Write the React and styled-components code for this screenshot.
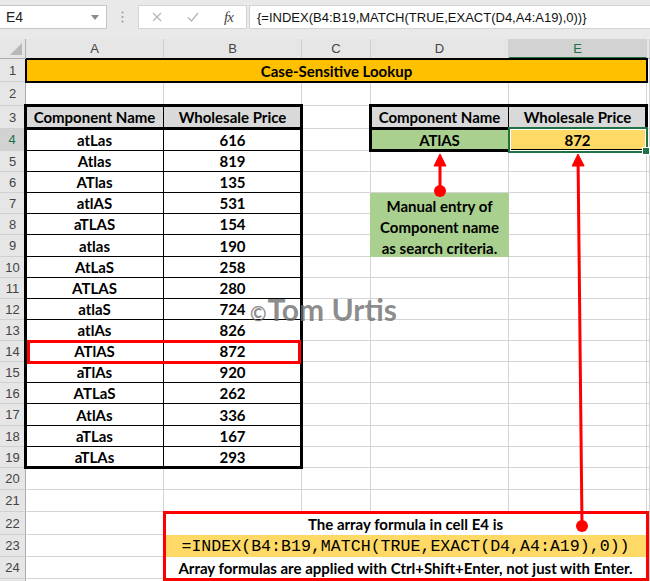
import React from 'react';
import styled, { createGlobalStyle } from 'styled-components';

const GlobalStyle = createGlobalStyle`
  html, body {
    margin: 0;
    padding: 0;
    background: #ffffff;
  }
  body {
    overflow: hidden;
  }
`;

// excel row heights, rows 1..25
const ROW_H = [23, 24, 23, 22, 21, 21, 21, 21, 22, 21, 21, 21, 21, 21, 21, 21, 22, 21, 21, 22, 22, 23, 22, 22, 21];
const COLS = ['A', 'B', 'C', 'D', 'E', 'F'];

const PARTS = [
  ['atLas', 616],
  ['Atlas', 819],
  ['ATlas', 135],
  ['atlAS', 531],
  ['aTLAS', 154],
  ['atlas', 190],
  ['AtLaS', 258],
  ['ATLAS', 280],
  ['atlaS', 724],
  ['atlAs', 826],
  ['ATlAS', 872],
  ['aTlAs', 920],
  ['ATLaS', 262],
  ['AtlAs', 336],
  ['aTLas', 167],
  ['aTLAs', 293],
];

const Window = styled.div`
  position: relative;
  width: 650px;
  height: 581px;
  overflow: hidden;
  background: #e9e9e9;
  font-family: 'Lato', sans-serif;
`;

const FormulaBar = styled.div`
  display: flex;
  align-items: flex-start;
  height: 39px;
  padding-top: 5px;
  box-sizing: border-box;
`;

const NameBox = styled.div`
  width: 107px;
  height: 24px;
  box-sizing: border-box;
  background: #fff;
  border: 1px solid #c6c6c6;
  border-left: none;
  display: flex;
  align-items: center;
  justify-content: space-between;
  padding: 0 7px 0 6px;
  font-family: 'Liberation Sans', sans-serif;
  font-size: 14px;
  color: #222;
`;

const Dots = styled.div`
  width: 31px;
  height: 24px;
  display: flex;
  align-items: center;
  justify-content: center;
`;

const FxBox = styled.div`
  width: 109px;
  height: 24px;
  box-sizing: border-box;
  background: #fff;
  border: 1px solid #d4d4d4;
  display: grid;
  grid-template-columns: 36px 36px 35px;
  align-items: center;
  justify-items: center;
`;

const FxLabel = styled.span`
  font-family: 'Liberation Serif', serif;
  font-style: italic;
  font-size: 15px;
  color: #444;
  letter-spacing: -1px;
`;

const FormulaInput = styled.div`
  flex: 1;
  height: 24px;
  margin-left: 2px;
  box-sizing: border-box;
  background: #fff;
  border: 1px solid #d4d4d4;
  border-right: none;
  padding-left: 7px;
  display: flex;
  align-items: center;
  font-family: 'Liberation Sans', sans-serif;
  font-size: 13px;
  color: #111;
`;

const Sheet = styled.div`
  display: grid;
  grid-template-columns: 26px 138px 138px 69px 138px 138px 1fr;
  grid-template-rows: 20px ${ROW_H.map((h) => h + 'px').join(' ')};
  background: #fff;
`;

const Corner = styled.div`
  grid-row: 1;
  grid-column: 1;
  position: relative;
  background: #e6e6e6;
  border-right: 1px solid #ababab;
  border-bottom: 1px solid #ababab;
  box-sizing: border-box;
`;

const ColHeader = styled.div`
  grid-row: 1;
  display: flex;
  align-items: center;
  justify-content: center;
  box-sizing: border-box;
  background: ${(p) => (p.$active ? '#d2d2d2' : '#e6e6e6')};
  border-right: 1px solid #d0d0d0;
  border-bottom: ${(p) => (p.$active ? '2px solid #217346' : '1px solid #ababab')};
  color: ${(p) => (p.$active ? '#217346' : '#444')};
  font-family: 'Liberation Sans', sans-serif;
  font-size: 13px;
`;

const RowHeader = styled.div`
  grid-column: 1;
  display: flex;
  align-items: center;
  justify-content: center;
  box-sizing: border-box;
  background: ${(p) => (p.$active ? '#d2d2d2' : '#e6e6e6')};
  border-bottom: 1px solid #d0d0d0;
  border-right: ${(p) => (p.$active ? '2px solid #217346' : '1px solid #ababab')};
  color: ${(p) => (p.$active ? '#217346' : '#444')};
  font-family: 'Liberation Sans', sans-serif;
  font-size: 13px;
`;

const GridCell = styled.div`
  box-sizing: border-box;
  border-right: 1px solid #d4d4d4;
  border-bottom: 1px solid #d4d4d4;
`;

const Block = styled.div`
  grid-row: ${(p) => p.$r} / span ${(p) => p.$rs || 1};
  grid-column: ${(p) => p.$c} / span ${(p) => p.$cs || 1};
  display: flex;
  align-items: center;
  justify-content: center;
  box-sizing: border-box;
  background: ${(p) => p.$bg || '#fff'};
  font-weight: 700;
  font-size: 15px;
  color: #000;
  white-space: nowrap;
`;

const TableCell = styled(Block)`
  border-right: 1px solid #000;
  border-bottom: 1px solid #000;
`;

const NoteBlock = styled(Block)`
  flex-direction: column;
  align-items: center;
  justify-content: flex-start;
  margin-left: -1px;
  padding-top: 3px;
  line-height: 21px;
  text-align: center;
`;

const FormulaCode = styled(Block)`
  font-family: 'Liberation Mono', monospace;
  font-weight: 400;
  font-size: 16.6px;
`;

const Frame = styled.div`
  grid-row: ${(p) => p.$r} / span ${(p) => p.$rs || 1};
  grid-column: ${(p) => p.$c} / span ${(p) => p.$cs || 1};
  box-sizing: border-box;
  border: ${(p) => p.$w}px solid ${(p) => p.$color};
  margin: ${(p) => p.$m};
  pointer-events: none;
`;

const Selection = styled.div`
  grid-row: 5;
  grid-column: 6;
  position: relative;
  box-sizing: border-box;
  margin: -2px -1px -2px -1px;
  border: 2px solid #217346;
  box-shadow: inset 0 0 0 1px #fff;
`;

const Handle = styled.div`
  position: absolute;
  right: -4px;
  bottom: -4px;
  width: 6px;
  height: 6px;
  background: #217346;
  border: 1px solid #fff;
`;

const Watermark = styled.div`
  position: absolute;
  left: 250px;
  top: 291px;
  display: flex;
  align-items: baseline;
  color: rgba(110, 110, 110, 0.8);
  font-family: 'Lato', sans-serif;
  font-weight: 700;
  font-size: 30px;
  pointer-events: none;
`;

const Copy = styled.span`
  font-size: 20px;
  margin-right: 1px;
`;

const Overlay = styled.svg`
  position: absolute;
  left: 0;
  top: 0;
  pointer-events: none;
`;

const Arrow = ({ x1, y1, x2, y2 }) => {
  const dx = x2 - x1;
  const dy = y2 - y1;
  const len = Math.sqrt(dx * dx + dy * dy);
  const ux = dx / len;
  const uy = dy / len;
  const head = 12;
  const bx = x2 - ux * head;
  const by = y2 - uy * head;
  const px = -uy * 6;
  const py = ux * 6;
  return (
    <g fill="#ff0000" stroke="#ff0000">
      <line x1={x1} y1={y1} x2={bx} y2={by} strokeWidth="3" />
      <polygon points={`${x2},${y2} ${bx + px},${by + py} ${bx - px},${by - py}`} strokeWidth="1" />
      <circle cx={x1} cy={y1} r="6" stroke="none" />
    </g>
  );
};

const App = () => {
  const rows = ROW_H.map((_, i) => i + 1);
  return (
    <Window>
      <GlobalStyle />
      <FormulaBar>
        <NameBox>
          <span>E4</span>
          <svg width="8" height="5" viewBox="0 0 8 5">
            <path d="M0 0 L8 0 L4 5 Z" fill="#8a8a8a" />
          </svg>
        </NameBox>
        <Dots>
          <svg width="3" height="12" viewBox="0 0 3 12">
            <circle cx="1.5" cy="1.5" r="1" fill="#9a9a9a" />
            <circle cx="1.5" cy="6" r="1" fill="#9a9a9a" />
            <circle cx="1.5" cy="10.5" r="1" fill="#9a9a9a" />
          </svg>
        </Dots>
        <FxBox>
          <svg width="10" height="10" viewBox="0 0 10 10">
            <path d="M1 1 L9 9 M9 1 L1 9" stroke="#b4b4b4" strokeWidth="1.2" />
          </svg>
          <svg width="12" height="10" viewBox="0 0 12 10">
            <path d="M1 5.5 L4.5 9 L11 1" stroke="#b4b4b4" strokeWidth="1.2" fill="none" />
          </svg>
          <FxLabel>fx</FxLabel>
        </FxBox>
        <FormulaInput>{'{=INDEX(B4:B19,MATCH(TRUE,EXACT(D4,A4:A19),0))}'}</FormulaInput>
      </FormulaBar>

      <Sheet>
        <Corner>
          <svg width="12" height="12" viewBox="0 0 12 12" style={{ position: 'absolute', right: 3, bottom: 3 }}>
            <path d="M12 0 L12 12 L0 12 Z" fill="#b8b8b8" />
          </svg>
        </Corner>
        {COLS.map((c, i) => (
          <ColHeader key={c} $active={c === 'E'} style={{ gridColumn: i + 2 }}>
            {c === 'F' ? '' : c}
          </ColHeader>
        ))}

        {rows.map((r) => (
          <React.Fragment key={r}>
            <RowHeader $active={r === 4} style={{ gridRow: r + 1 }}>
              {r < 25 ? r : ''}
            </RowHeader>
            {COLS.map((c, i) => (
              <GridCell key={c} style={{ gridRow: r + 1, gridColumn: i + 2 }} />
            ))}
          </React.Fragment>
        ))}

        {/* title row */}
        <Block $r={2} $c={2} $cs={5} $bg="#ffc000">
          Case-Sensitive Lookup
        </Block>

        {/* source table */}
        <TableCell $r={4} $c={2} $bg="#d9d9d9">Component Name</TableCell>
        <TableCell $r={4} $c={3} $bg="#d9d9d9">Wholesale Price</TableCell>
        {PARTS.map(([name, price], i) => (
          <React.Fragment key={name}>
            <TableCell $r={i + 5} $c={2}>{name}</TableCell>
            <TableCell $r={i + 5} $c={3}>{price}</TableCell>
          </React.Fragment>
        ))}

        {/* lookup table */}
        <TableCell $r={4} $c={5} $bg="#d9d9d9">Component Name</TableCell>
        <TableCell $r={4} $c={6} $bg="#d9d9d9">Wholesale Price</TableCell>
        <TableCell $r={5} $c={5} $bg="#a9d08e">ATlAS</TableCell>
        <TableCell $r={5} $c={6} $bg="#ffd966">872</TableCell>

        <NoteBlock $r={8} $c={5} $rs={3} $bg="#a9d08e">
          <span>Manual entry of</span>
          <span>Component name</span>
          <span>as search criteria.</span>
        </NoteBlock>

        {/* formula note */}
        <Block $r={23} $c={3} $cs={4}>The array formula in cell E4 is</Block>
        <FormulaCode $r={24} $c={3} $cs={4} $bg="#ffd966">
          =INDEX(B4:B19,MATCH(TRUE,EXACT(D4,A4:A19),0))
        </FormulaCode>
        <Block $r={25} $c={3} $cs={4}>
          Array formulas are applied with Ctrl+Shift+Enter, not just with Enter.
        </Block>

        <Frame $r={2} $c={2} $cs={5} $w={2} $color="#000" $m="-1px -1px -1px -1px" />
        <Frame $r={4} $c={2} $cs={2} $rs={17} $w={3} $color="#000" $m="-2px -1px -1px -2px" />
        <Frame $r={4} $c={2} $cs={2} $w={3} $color="#000" $m="-2px -1px -1px -2px" />
        <Frame $r={15} $c={2} $cs={2} $w={3} $color="#ff0000" $m="-1px 1px -2px 1px" />
        <Frame $r={4} $c={5} $cs={2} $rs={2} $w={3} $color="#000" $m="-2px -1px -1px -2px" />
        <Frame $r={4} $c={5} $cs={2} $w={3} $color="#000" $m="-2px -1px -1px -2px" />
        <Frame $r={23} $c={3} $cs={4} $rs={3} $w={3} $color="#ff0000" $m="-1px -2px -2px -1px" />

        <Selection>
          <Handle />
        </Selection>
      </Sheet>

      <Watermark>
        <Copy>©</Copy>Tom Urtis
      </Watermark>

      <Overlay width="650" height="581" viewBox="0 0 650 581">
        <Arrow x1={440} y1={191} x2={440} y2={154} />
        <Arrow x1={582} y1={526} x2={578} y2={154} />
      </Overlay>
    </Window>
  );
};

export default App;
